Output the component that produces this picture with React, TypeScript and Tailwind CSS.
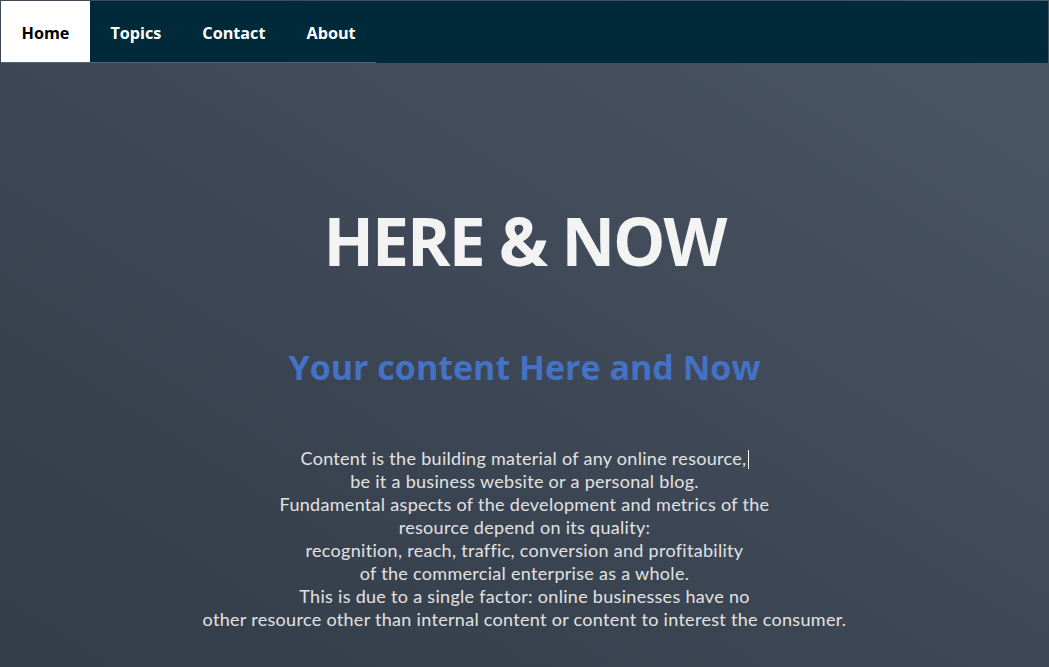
import React from "react";

const lines = [
  "Content is the building material of any online resource,",
  "be it a business website or a personal blog.",
  "Fundamental aspects of the development and metrics of the",
  "resource depend on its quality:",
  "recognition, reach, traffic, conversion and profitability",
  "of the commercial enterprise as a whole.",
  "This is due to a single factor: online businesses have no",
  "other resource other than internal content or content to interest the consumer.",
];

export default function App() {
  const nav = ["Home", "Topics", "Contact", "About"];
  return (
    <div className="w-[1049px] h-[667px] overflow-hidden bg-gradient-to-tr from-[#333c48] via-[#3e4856] to-[#4c5765] p-px pb-0">
      <nav className="h-[62px] bg-[#002a3a] flex items-stretch">
        <ul className="flex items-stretch border-b border-[#4a6775]">
          {nav.map((n, i) => (
            <li
              key={n}
              className={
                "px-[20.5px] pt-[3px] flex items-center text-[16.2px] font-bold font-['Open_Sans',sans-serif] " +
                (i === 0 ? "bg-white text-black" : "text-white")
              }
            >
              {n}
            </li>
          ))}
        </ul>
      </nav>
      <main className="flex flex-col items-center text-center">
        <h1 className="mt-[137px] text-[66px] leading-[80px] font-bold text-[#f3f3f3] font-['Open_Sans',sans-serif] tracking-[-2px]">
          HERE &amp; NOW
        </h1>
        <h2 className="mt-[67px] text-[34px] leading-[40px] font-bold text-[#4472c4] font-['Open_Sans',sans-serif] tracking-[0px]">
          Your content Here and Now
        </h2>
        <div className="mt-[60px] text-[18px] leading-[23px] text-[#e2e2e2] font-['Lato',sans-serif] tracking-[0.3px]">
          {lines.map((l, i) => (
            <p key={i}>
              {l}
              {i === 0 && (
                <span className="inline-block w-px h-[19px] bg-white align-[-4px] ml-px" />
              )}
            </p>
          ))}
        </div>
      </main>
    </div>
  );
}
